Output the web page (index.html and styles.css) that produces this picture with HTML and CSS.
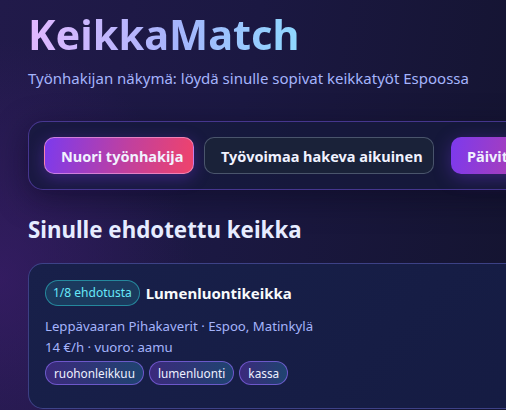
FILE: index.html
```html
<!DOCTYPE html>
<html lang="fi">
<head>
<meta charset="utf-8">
<link rel="stylesheet" href="styles.css">
</head>
<body>
<main class="app">
  <header class="hero">
    <h1 class="logo">KeikkaMatch</h1>
    <p class="lead">Työnhakijan näkymä: löydä sinulle sopivat keikkatyöt Espoossa</p>
  </header>
  <section class="panel">
    <button class="btn btn-active">Nuori työnhakija</button>
    <button class="btn btn-ghost">Työvoimaa hakeva aikuinen</button>
    <button class="btn btn-refresh">Päivitä ehdotukset</button>
  </section>
  <h2 class="section-title">Sinulle ehdotettu keikka</h2>
  <article class="card">
    <div class="card-head">
      <span class="badge">1/8 ehdotusta</span>
      <h3 class="job-title">Lumenluontikeikka</h3>
    </div>
    <p class="meta">Leppävaaran Pihakaverit · Espoo, Matinkylä</p>
    <p class="meta">14 €/h · vuoro: aamu</p>
    <div class="chips">
      <span class="chip">ruohonleikkuu</span>
      <span class="chip">lumenluonti</span>
      <span class="chip">kassa</span>
    </div>
  </article>
</main>
</body>
</html>
```
FILE: styles.css
```css
html, body {
  margin: 0;
  padding: 0;
  height: 100%;
  overflow: hidden;
}
body {
  font-family: "Noto Sans", "Open Sans", sans-serif;
  color: #e0e7ff;
  background:
    radial-gradient(ellipse 260px 320px at 0% 68%, rgba(70, 30, 120, 0.5), rgba(70, 30, 120, 0) 75%),
    linear-gradient(100deg, #211a4a 0%, #1b1842 45%, #141430 100%);
}
.app {
  width: 760px;
  padding: 6px 28px 0;
  box-sizing: border-box;
}
.logo {
  margin: 0;
  font-size: 41.5px;
  line-height: 56px;
  font-weight: 700;
  background: linear-gradient(90deg, #e2b8ff 0%, #a5b4fc 55%, #8fd8ff 100%);
  -webkit-background-clip: text;
  background-clip: text;
  color: transparent;
  display: inline-block;
}
.lead {
  margin: 6px 0 0;
  font-size: 15px;
  color: #a5b4fc;
}
.panel {
  margin-top: 33px;
  display: flex;
  align-items: center;
  gap: 10px;
  padding: 15px 15px;
  border: 1px solid rgba(110, 80, 210, 0.55);
  border-radius: 15px;
  background: rgba(22, 26, 60, 0.75);
  box-shadow: 0 8px 30px rgba(10, 8, 30, 0.5);
}
.btn {
  height: 37px;
  padding: 0 16px;
  border-radius: 10px;
  font-family: inherit;
  font-size: 14.5px;
  font-weight: 700;
  color: #f1f2ff;
  cursor: pointer;
  white-space: nowrap;
}
.btn-active {
  width: 150px;
  border: 1px solid rgba(255, 180, 230, 0.55);
  background: linear-gradient(100deg, #7c3aed 0%, #c0409f 55%, #f0436b 100%);
  box-shadow: 0 4px 16px rgba(124, 58, 237, 0.35);
}
.btn-ghost {
  width: 230px;
  border: 1px solid rgba(148, 163, 184, 0.4);
  background: #1a2239;
}
.btn-refresh {
  margin-left: 7px;
  border: none;
  background: linear-gradient(100deg, #7c3aed 0%, #c0409f 60%, #f0436b 100%);
  box-shadow: 0 4px 18px rgba(124, 58, 237, 0.35);
}
.section-title {
  margin: 25px 0 0;
  font-size: 22.3px;
  line-height: 30px;
  font-weight: 700;
  color: #e6ecff;
}
.card {
  margin-top: 18px;
  height: 146px;
  box-sizing: border-box;
  padding: 16px 16px 0;
  border: 1px solid rgba(99, 102, 200, 0.5);
  border-radius: 15px;
  background: linear-gradient(135deg, #18204a 0%, #141a40 100%);
}
.card-head {
  display: flex;
  align-items: center;
  gap: 6px;
}
.badge {
  height: 24px;
  line-height: 24px;
  padding: 0 7px;
  border: 1px solid rgba(45, 190, 200, 0.6);
  border-radius: 13px;
  background: rgba(30, 90, 120, 0.45);
  color: #67e8f9;
  font-size: 12px;
}
.job-title {
  margin: 0;
  font-size: 15px;
  font-weight: 700;
  color: #f8fafc;
}
.meta {
  margin: 0;
  font-size: 13.2px;
  line-height: 21px;
  color: #a5b4fc;
}
.card-head + .meta {
  margin-top: 10px;
}
.chips {
  margin-top: 3px;
  display: flex;
  gap: 5px;
}
.chip {
  height: 22px;
  line-height: 22px;
  padding: 0 8px;
  border: 1px solid rgba(130, 100, 230, 0.75);
  border-radius: 12px;
  background: linear-gradient(90deg, #3b2a7c 0%, #1f4470 100%);
  color: #eef0ff;
  font-size: 11.8px;
}
```
